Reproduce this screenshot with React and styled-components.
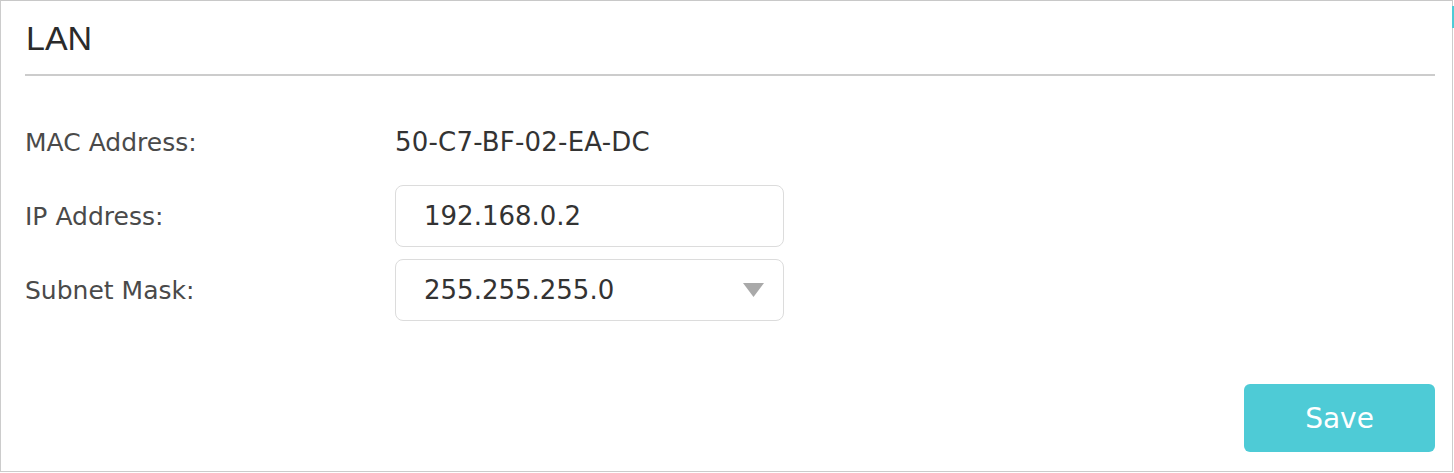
import styled, { createGlobalStyle } from 'styled-components'

const GlobalStyle = createGlobalStyle`
  body{
    margin: 0;
    background: #fff;
    font-family: "DejaVu Sans", Verdana, sans-serif;
  }
`

const Card = styled.div`
  position: relative;
  box-sizing: border-box;
  width: 1453px;
  height: 472px;
  border: 1px solid #cccccc;
  border-top-color: #c8c8c8;
  padding: 17px 17px 19px 24px;
  display: flex;
  flex-direction: column;
  background: #fff;
`

const Edge = styled.span`
  position: absolute;
  right: -2px;
  top: 5px;
  width: 2px;
  height: 22px;
  background: #4ecbd6;
`

const Title = styled.h2`
  margin: 0;
  padding: 0 0 16px 1px;
  font-family: "Liberation Sans", Arial, sans-serif;
  font-weight: normal;
  font-size: 34px;
  line-height: 40px;
  color: #2b2b2b;
  border-bottom: 2px solid #cccccc;
`

const Form = styled.div`
  display: flex;
  flex-direction: column;
  gap: 12px;
  margin-top: 35px;
`

const Row = styled.div`
  display: grid;
  grid-template-columns: 370px 389px;
  align-items: center;
  height: 62px;
`

const Label = styled.span`
  font-size: 25px;
  color: #4a4a4a;
`

const Value = styled.span`
  font-size: 26px;
  color: #333;
  letter-spacing: 0.2px;
`

const Field = styled.div`
  box-sizing: border-box;
  height: 62px;
  border: 1px solid #dcdcdc;
  border-radius: 8px;
  padding: 0 19px 0 28px;
  display: flex;
  align-items: center;
  justify-content: space-between;
  font-size: 26px;
  color: #333;
  background: #fff;
`

const Footer = styled.div`
  display: flex;
  justify-content: flex-end;
  margin-top: auto;
`

const SaveButton = styled.button`
  width: 191px;
  height: 68px;
  border: none;
  border-radius: 6px;
  background: #4ecbd6;
  color: #fff;
  font-family: "DejaVu Sans", Verdana, sans-serif;
  font-size: 28px;
  cursor: pointer;
`

function Arrow(){
  return(
    <svg width="21" height="14" viewBox="0 0 21 14">
      <polygon points="0,0 21,0 10.5,14" fill="#a9a9a9" />
    </svg>
  )
}

function App(){
  return(
    <>
      <GlobalStyle />
      <Card>
        <Edge />
        <Title>LAN</Title>
        <Form>
          <Row>
            <Label>MAC Address:</Label>
            <Value>50-C7-BF-02-EA-DC</Value>
          </Row>
          <Row>
            <Label>IP Address:</Label>
            <Field>192.168.0.2</Field>
          </Row>
          <Row>
            <Label>Subnet Mask:</Label>
            <Field>
              <span>255.255.255.0</span>
              <Arrow />
            </Field>
          </Row>
        </Form>
        <Footer>
          <SaveButton>Save</SaveButton>
        </Footer>
      </Card>
    </>
  )
}

export default App
